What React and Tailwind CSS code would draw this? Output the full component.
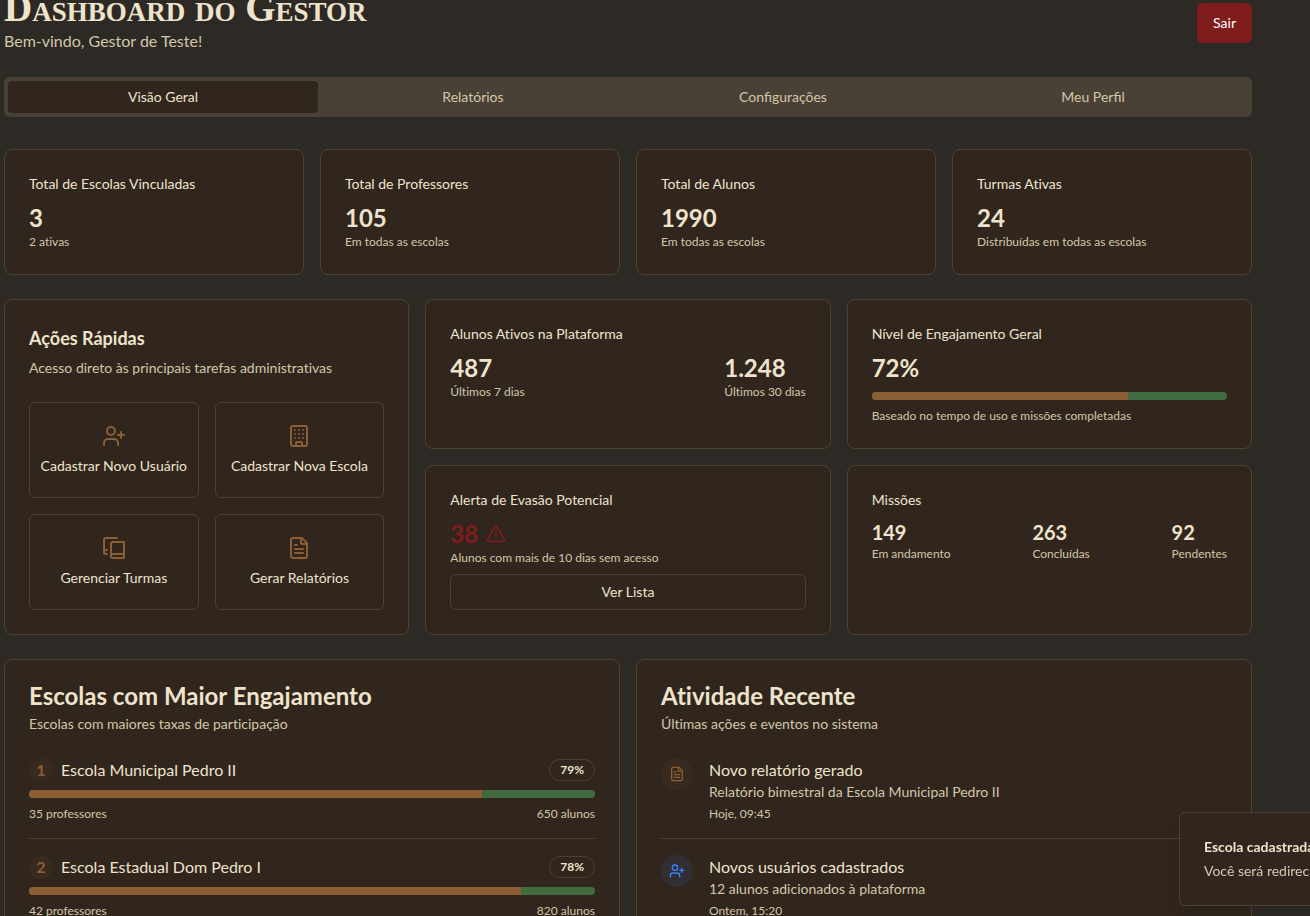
import React from 'react';
import { UserPlus, Building, FileText, TriangleAlert } from 'lucide-react';

function BookCopy({ className }) {
  return (
    <svg className={className} viewBox="0 0 24 24" fill="none" stroke="currentColor" strokeWidth="2" strokeLinecap="round" strokeLinejoin="round" aria-hidden="true">
      <path d="M2 16V4a2 2 0 0 1 2-2h11" />
      <path d="M5 14H4a2 2 0 1 0 0 4h1" />
      <path d="M22 18H11a2 2 0 1 0 0 4h11V6H11a2 2 0 0 0-2 2v12" />
    </svg>
  );
}

function Card({ className = '', children }) {
  return <section className={`rounded-lg border border-[#504230] bg-[#30261e] p-6 ${className}`}>{children}</section>;
}

function Metric({ value, label, large = true }) {
  return (
    <div>
      <p className={large ? 'text-2xl leading-8 font-bold' : 'text-xl leading-7 font-bold'}>{value}</p>
      <p className="text-xs leading-4 text-[#d3c6a6]">{label}</p>
    </div>
  );
}

function Progress({ value, label }) {
  return (
    <div role="progressbar" aria-label={label} aria-valuenow={value} aria-valuemin={0} aria-valuemax={100} className="mt-2 h-2 w-full overflow-hidden rounded-full bg-[#3f6b3f]">
      <div className="h-full bg-[#8b5e34]" style={{ width: `${value}%` }} />
    </div>
  );
}

const tabs = ['Visão Geral', 'Relatórios', 'Configurações', 'Meu Perfil'];

const totals = [
  { title: 'Total de Escolas Vinculadas', value: '3', label: '2 ativas' },
  { title: 'Total de Professores', value: '105', label: 'Em todas as escolas' },
  { title: 'Total de Alunos', value: '1990', label: 'Em todas as escolas' },
  { title: 'Turmas Ativas', value: '24', label: 'Distribuídas em todas as escolas' },
];

const actions = [
  { label: 'Cadastrar Novo Usuário', Icon: UserPlus },
  { label: 'Cadastrar Nova Escola', Icon: Building },
  { label: 'Gerenciar Turmas', Icon: BookCopy },
  { label: 'Gerar Relatórios', Icon: FileText },
];

const schools = [
  { name: 'Escola Municipal Pedro II', score: '79%', bar: 80, teachers: '35 professores', students: '650 alunos' },
  { name: 'Escola Estadual Dom Pedro I', score: '78%', bar: 87, teachers: '42 professores', students: '820 alunos' },
];

const events = [
  { title: 'Novo relatório gerado', text: 'Relatório bimestral da Escola Municipal Pedro II', time: 'Hoje, 09:45', Icon: FileText, tone: 'bg-[#392a20] text-[#8b5e34]' },
  { title: 'Novos usuários cadastrados', text: '12 alunos adicionados à plataforma', time: 'Ontem, 15:20', Icon: UserPlus, tone: 'bg-[#312f34] text-[#3b82f6]' },
];

export default function App() {
  return (
    <div className="h-screen overflow-hidden bg-[#2d2a26] pr-[58px] pl-1 font-['Lato',sans-serif] text-[#efe3cb] [font-variant-ligatures:none]">
      <header className="mb-6 flex items-start justify-between">
        <div>
          <h1 className="mb-[13px] font-['Liberation_Serif',serif] text-[39px] leading-[16px] font-bold [font-variant-caps:small-caps]">Dashboard do Gestor</h1>
          <p className="text-base leading-6 text-[#d3c6a6]">Bem-vindo, Gestor de Teste!</p>
        </div>
        <button type="button" className="mt-[3px] h-10 rounded-md bg-[#7f1d1d] px-4 text-sm text-white">Sair</button>
      </header>

      <div role="tablist" className="grid grid-cols-4 rounded-md bg-[#4a4136] p-1 [font-variant-ligatures:normal]">
        {tabs.map((tab, i) => (
          <button
            key={tab}
            type="button"
            role="tab"
            aria-selected={i === 0}
            className={i === 0 ? 'h-8 rounded-sm bg-[#30261e] text-sm' : 'h-8 rounded-sm text-sm text-[#d3c6a6]'}
          >
            {tab}
          </button>
        ))}
      </div>

      <main className="mt-8 flex flex-col gap-6">
        <div className="grid grid-cols-4 gap-4">
          {totals.map((item) => (
            <Card key={item.title}>
              <h2 className="mb-2 text-sm leading-5">{item.title}</h2>
              <Metric value={item.value} label={item.label} />
            </Card>
          ))}
        </div>

        <div className="grid grid-cols-3 gap-4">
          <Card className="row-span-2">
            <h2 className="text-lg leading-7 font-bold">Ações Rápidas</h2>
            <p className="mt-[6px] text-sm leading-5 text-[#d3c6a6]">Acesso direto às principais tarefas administrativas</p>
            <div className="mt-6 grid grid-cols-2 gap-4">
              {actions.map(({ label, Icon }) => (
                <button key={label} type="button" className="flex h-24 flex-col items-center justify-center gap-2 rounded-md border border-[#504230] text-sm leading-5 whitespace-nowrap">
                  <Icon className="size-6 text-[#8b5e34]" />
                  {label}
                </button>
              ))}
            </div>
          </Card>

          <Card>
            <h2 className="mb-2 text-sm leading-5">Alunos Ativos na Plataforma</h2>
            <div className="flex justify-between">
              <Metric value="487" label="Últimos 7 dias" />
              <Metric value="1.248" label="Últimos 30 dias" />
            </div>
          </Card>

          <Card>
            <h2 className="mb-2 text-sm leading-5">Nível de Engajamento Geral</h2>
            <p className="text-2xl leading-8 font-bold">72%</p>
            <Progress value={72} label="Nível de Engajamento Geral" />
            <p className="mt-2 text-xs leading-4 text-[#d3c6a6]">Baseado no tempo de uso e missões completadas</p>
          </Card>

          <Card>
            <h2 className="mb-2 text-sm leading-5">Alerta de Evasão Potencial</h2>
            <p className="flex items-center gap-2 text-2xl leading-8 font-bold text-[#7f1d1d]">
              38
              <TriangleAlert className="size-5" />
            </p>
            <p className="text-xs leading-4 text-[#d3c6a6]">Alunos com mais de 10 dias sem acesso</p>
            <button type="button" className="mt-2 h-9 w-full rounded-md border border-[#504230] text-sm">Ver Lista</button>
          </Card>

          <Card>
            <h2 className="mb-2 text-sm leading-5">Missões</h2>
            <div className="flex justify-between">
              <Metric large={false} value="149" label="Em andamento" />
              <Metric large={false} value="263" label="Concluídas" />
              <Metric large={false} value="92" label="Pendentes" />
            </div>
          </Card>
        </div>

        <div className="grid grid-cols-2 gap-4">
          <Card>
            <h2 className="text-2xl leading-6 font-bold">Escolas com Maior Engajamento</h2>
            <p className="mt-[6px] text-sm leading-5 text-[#d3c6a6]">Escolas com maiores taxas de participação</p>
            <ol className="mt-6 flex flex-col gap-4">
              {schools.map((school, i) => (
                <li key={school.name} className="border-b border-[#504230] pb-4">
                  <div className="flex items-center gap-2">
                    <span className="flex size-6 items-center justify-center rounded-full bg-[#392a20] font-bold text-[#8b5e34]">{i + 1}</span>
                    <h3 className="text-base leading-6">{school.name}</h3>
                    <span className="ml-auto rounded-full border border-[#504230] px-[10px] py-[2px] text-xs leading-4 font-bold">{school.score}</span>
                  </div>
                  <Progress value={school.bar} label={school.name} />
                  <div className="mt-2 flex justify-between text-xs leading-4 text-[#d3c6a6]">
                    <span>{school.teachers}</span>
                    <span>{school.students}</span>
                  </div>
                </li>
              ))}
            </ol>
          </Card>

          <Card>
            <h2 className="text-2xl leading-6 font-bold">Atividade Recente</h2>
            <p className="mt-[6px] text-sm leading-5 text-[#d3c6a6]">Últimas ações e eventos no sistema</p>
            <ul className="mt-6 flex flex-col gap-4">
              {events.map(({ title, text, time, Icon, tone }) => (
                <li key={title} className="flex gap-4 border-b border-[#504230] pb-4">
                  <span className={`flex size-8 items-center justify-center rounded-full ${tone}`}>
                    <Icon className="size-4" />
                  </span>
                  <div>
                    <h3 className="text-base leading-6">{title}</h3>
                    <p className="text-sm leading-5 text-[#d3c6a6]">{text}</p>
                    <p className="mt-1 text-xs leading-4 text-[#d3c6a6]">{time}</p>
                  </div>
                </li>
              ))}
            </ul>
          </Card>
        </div>
      </main>

      <div role="status" className="fixed -right-[289px] bottom-[10px] flex w-[420px] flex-col gap-1 rounded-md border border-[#504230] bg-[#30261e] p-6 text-sm leading-5 shadow-lg">
        <p className="font-bold">Escola cadastrada</p>
        <p className="text-[#d6c9b2]">Você será redirecionado</p>
      </div>
    </div>
  );
}
